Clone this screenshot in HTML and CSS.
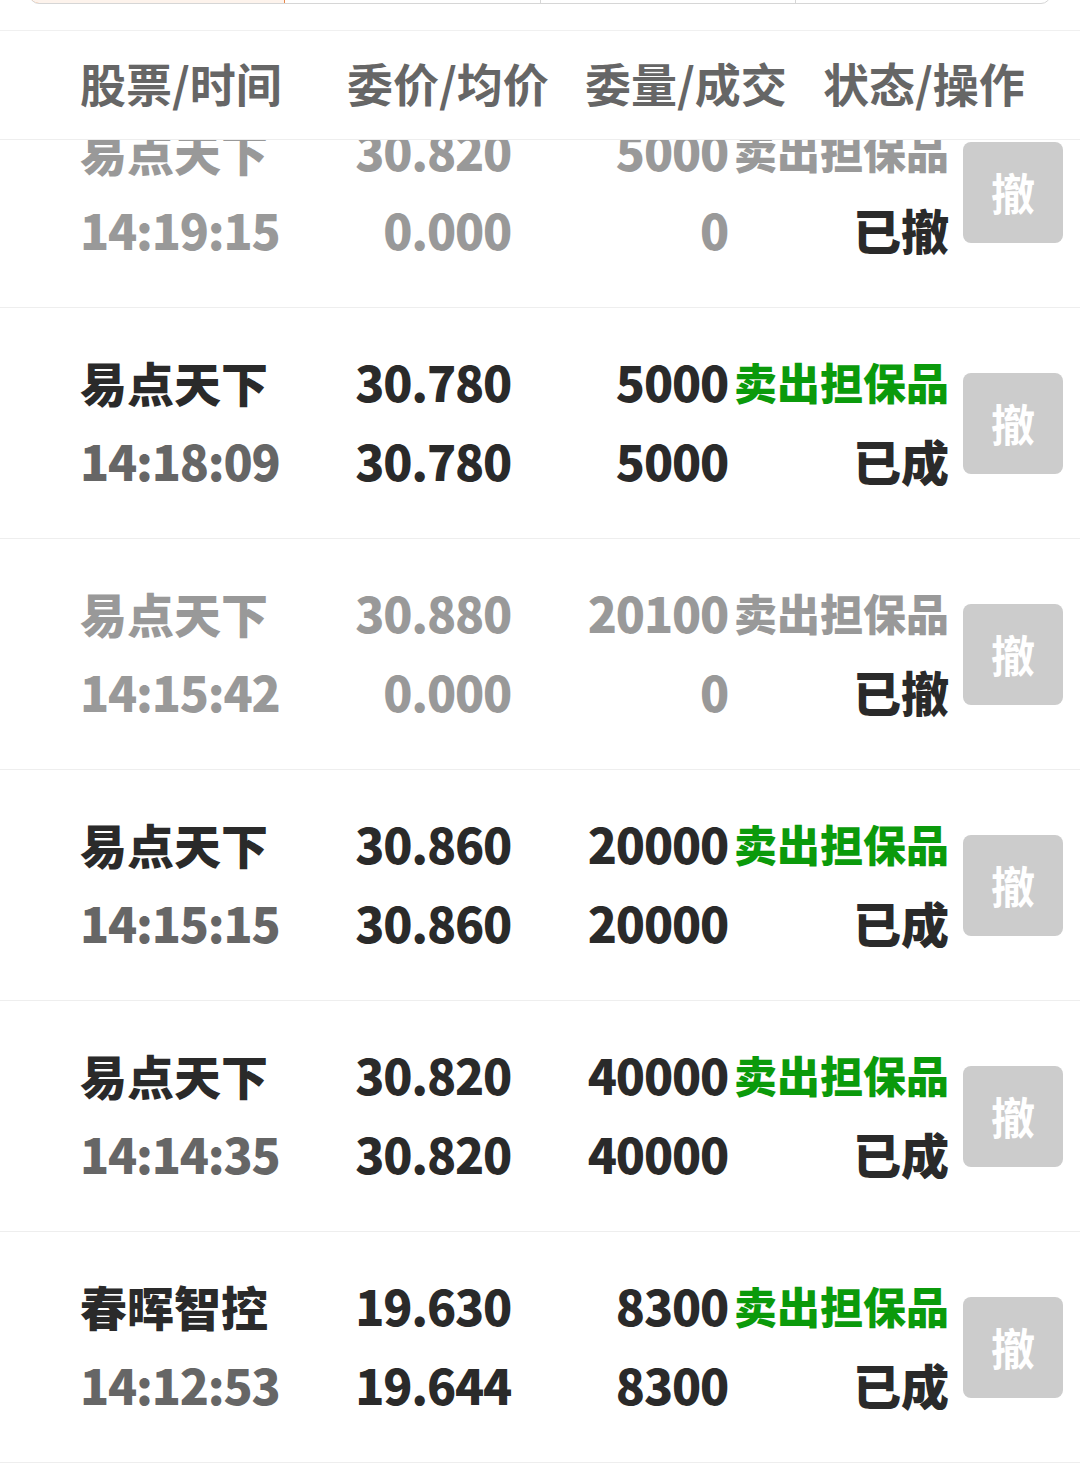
FILE: index.html
```html
<!DOCTYPE html>
<html lang="zh-CN">
<head>
<meta charset="utf-8">
<title>委托列表</title>
<link rel="stylesheet" href="styles.css">
</head>
<body>
<div class="page">
  <div class="tabs-wrap">
    <div class="tabs">
      <div class="tab active"></div>
      <div class="tab"></div>
      <div class="tab"></div>
      <div class="tab last"></div>
    </div>
  </div>

  <div class="thead">
    <span>股票/时间</span>
    <span>委价/均价</span>
    <span>委量/成交</span>
    <span>状态/操作</span>
  </div>

  <div class="list">
    <div class="row cancelled">
      <div class="cells">
        <span class="c1">易点天下</span><span class="c2">30.820</span><span class="c3">5000</span><span class="c4 label">卖出担保品</span>
        <span class="c1 time">14:19:15</span><span class="c2">0.000</span><span class="c3">0</span><span class="c4 status">已撤</span>
      </div>
      <button class="cancel">撤</button>
    </div>

    <div class="row">
      <div class="cells">
        <span class="c1">易点天下</span><span class="c2">30.780</span><span class="c3">5000</span><span class="c4 label">卖出担保品</span>
        <span class="c1 time">14:18:09</span><span class="c2">30.780</span><span class="c3">5000</span><span class="c4 status">已成</span>
      </div>
      <button class="cancel">撤</button>
    </div>

    <div class="row cancelled">
      <div class="cells">
        <span class="c1">易点天下</span><span class="c2">30.880</span><span class="c3">20100</span><span class="c4 label">卖出担保品</span>
        <span class="c1 time">14:15:42</span><span class="c2">0.000</span><span class="c3">0</span><span class="c4 status">已撤</span>
      </div>
      <button class="cancel">撤</button>
    </div>

    <div class="row">
      <div class="cells">
        <span class="c1">易点天下</span><span class="c2">30.860</span><span class="c3">20000</span><span class="c4 label">卖出担保品</span>
        <span class="c1 time">14:15:15</span><span class="c2">30.860</span><span class="c3">20000</span><span class="c4 status">已成</span>
      </div>
      <button class="cancel">撤</button>
    </div>

    <div class="row">
      <div class="cells">
        <span class="c1">易点天下</span><span class="c2">30.820</span><span class="c3">40000</span><span class="c4 label">卖出担保品</span>
        <span class="c1 time">14:14:35</span><span class="c2">30.820</span><span class="c3">40000</span><span class="c4 status">已成</span>
      </div>
      <button class="cancel">撤</button>
    </div>

    <div class="row">
      <div class="cells">
        <span class="c1">春晖智控</span><span class="c2">19.630</span><span class="c3">8300</span><span class="c4 label">卖出担保品</span>
        <span class="c1 time">14:12:53</span><span class="c2">19.644</span><span class="c3">8300</span><span class="c4 status">已成</span>
      </div>
      <button class="cancel">撤</button>
    </div>
  </div>
</div>
</body>
</html>
```

FILE: styles.css
```css
* {
  box-sizing: border-box;
}

html, body {
  margin: 0;
  padding: 0;
  background: #ffffff;
}

body {
  font-family: "Noto Sans CJK SC", "Noto Sans", sans-serif;
  color: #2a2a2a;
  overflow: hidden;
}

.page {
  width: 1080px;
  height: 1463px;
  overflow: hidden;
}

/* tab strip, mostly scrolled away */
.tabs-wrap {
  height: 30px;
  overflow: hidden;
}

.tabs {
  margin: -40px 29px 0 29px;
  height: 44px;
  display: flex;
  border: 1px solid #d6d6d6;
  border-radius: 0 0 10px 10px;
  overflow: hidden;
}

.tab {
  flex: 1;
  border-right: 1px solid #d6d6d6;
}

.tab.last {
  border-right: none;
}

.tab.active {
  background: #fdf3ec;
  border: 1px solid #e8874a;
  border-radius: 0 0 0 10px;
  margin: -1px 0 -1px -1px;
}

/* header */
.thead {
  position: relative;
  z-index: 2;
  background: #ffffff;
  height: 110px;
  border-top: 1px solid #f0f0f0;
  border-bottom: 1px solid #eeeeee;
  display: grid;
  grid-template-columns: 267px 238px 238px 1fr;
  align-items: center;
  padding-left: 80px;
  padding-bottom: 6px;
  font-size: 46px;
  font-weight: 700;
  color: #666666;
  line-height: 1;
}

/* list */
.list {
  margin-top: -63px;
}

.row {
  height: 231px;
  border-bottom: 1px solid #eeeeee;
  display: flex;
  align-items: center;
  padding: 0 17px 0 80px;
}

.cells {
  display: grid;
  grid-template-columns: 220px 211px 217px 221px;
  grid-auto-rows: 79px;
  align-items: center;
  font-size: 48px;
  font-weight: 900;
  line-height: 79px;
  margin-right: 14px;
  margin-bottom: 4px;
}

.cells span {
  white-space: nowrap;
}

.c1 {
  text-align: left;
  font-size: 47px;
}

.c2, .c3, .c4 {
  text-align: right;
}

.c2, .c3, .time {
  letter-spacing: -1.2px;
}

.time {
  color: #666666;
  font-size: 48px;
}

.label {
  color: #0b9a0b;
  font-size: 43px;
}

.status {
  color: #2a2a2a;
}

.cancelled .cells span {
  color: #999999;
}

.cancelled .cells .status {
  color: #2a2a2a;
}

.cancel {
  width: 101px;
  height: 101px;
  border: none;
  border-radius: 8px;
  background: #cccccc;
  color: #ffffff;
  font-family: "Noto Sans CJK SC", "Noto Sans", sans-serif;
  font-size: 44px;
  font-weight: 700;
  padding: 0;
  line-height: 1;
  display: flex;
  align-items: center;
  justify-content: center;
}
```
